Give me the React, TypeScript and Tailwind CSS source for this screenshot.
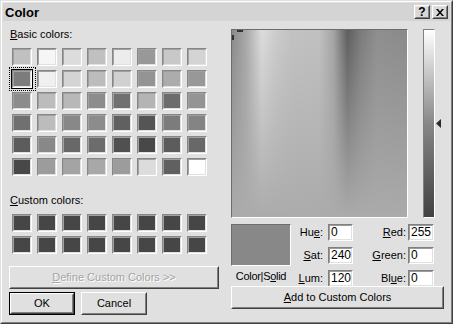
import React from "react";

const basic: string[][] = [
  ["bg-[#c0c0c0]", "bg-[#f6f6f6]", "bg-[#dcdcdc]", "bg-[#c0c0c0]", "bg-[#ececec]", "bg-[#989898]", "bg-[#c8c8c8]", "bg-[#d4d4d4]"],
  ["bg-[#7c7c7c]", "bg-[#f0f0f0]", "bg-[#d4d4d4]", "bg-[#bcbcbc]", "bg-[#d0d0d0]", "bg-[#949494]", "bg-[#acacac]", "bg-[#989898]"],
  ["bg-[#8c8c8c]", "bg-[#bcbcbc]", "bg-[#b8b8b8]", "bg-[#8c8c8c]", "bg-[#707070]", "bg-[#b4b4b4]", "bg-[#6c6c6c]", "bg-[#949494]"],
  ["bg-[#707070]", "bg-[#bcbcbc]", "bg-[#888888]", "bg-[#8c8c8c]", "bg-[#606060]", "bg-[#555555]", "bg-[#7c7c7c]", "bg-[#848484]"],
  ["bg-[#5c5c5c]", "bg-[#888888]", "bg-[#686868]", "bg-[#6c6c6c]", "bg-[#505050]", "bg-[#484848]", "bg-[#5c5c5c]", "bg-[#686868]"],
  ["bg-[#484848]", "bg-[#9c9c9c]", "bg-[#a4a4a4]", "bg-[#a8a8a8]", "bg-[#9c9c9c]", "bg-[#dcdcdc]", "bg-[#606060]", "bg-[#ffffff]"],
];

function Swatch({ color, selected }: { color: string; selected?: boolean }) {
  return (
    <div className="relative w-[20px] h-[18px]">
      <div className="w-full h-full border border-t-[#868686] border-l-[#868686] border-r-white border-b-white">
        <div className={`w-full h-full border border-t-[#a0a0a0] border-l-[#a0a0a0] border-r-[#e0e0e0] border-b-[#e0e0e0] ${color}`} />
      </div>
      {selected && (
        <>
          <div className="absolute -inset-[1px] border border-black" />
          <div className="absolute -top-[3px] -left-[3px] -right-[4px] -bottom-[3px] border border-dotted border-black" />
        </>
      )}
    </div>
  );
}

function Raised({
  children,
  className,
  def,
  disabled,
}: {
  children: React.ReactNode;
  className: string;
  def?: boolean;
  disabled?: boolean;
}) {
  const body = (
    <div className="w-full h-full border border-t-white border-l-white border-r-[#404040] border-b-[#404040]">
      <div
        className={`w-full h-full border border-t-[#e0e0e0] border-l-[#e0e0e0] border-r-[#808080] border-b-[#808080] flex items-center justify-center ${
          disabled ? "text-[#a4a4a4] [text-shadow:1px_1px_0_#ffffff]" : "text-black"
        }`}
      >
        {children}
      </div>
    </div>
  );
  if (def) {
    return <div className={`border border-black ${className}`}>{body}</div>;
  }
  return <div className={className}>{body}</div>;
}

function Field({ value, className }: { value: string; className: string }) {
  return (
    <div className={`h-[17px] border border-t-[#808080] border-l-[#808080] border-r-white border-b-white ${className}`}>
      <div className="w-full h-full border border-t-[#9a9a9a] border-l-[#9a9a9a] border-r-[#e0e0e0] border-b-[#e0e0e0] bg-white pl-[1px] leading-[13px] text-[12px]">
        {value}
      </div>
    </div>
  );
}

function Spectrum() {
  return (
    <div className="w-[177px] h-[189px] border border-t-[#6c6c6c] border-l-[#6c6c6c] border-r-white border-b-white">
      <svg width="175" height="187" className="block">
        <defs>
          <linearGradient id="hue" x1="0" x2="1" y1="0" y2="0">
            <stop offset="0" stopColor="#8a8a8a" />
            <stop offset="0.08" stopColor="#a8a8a8" />
            <stop offset="0.17" stopColor="#dcdcdc" />
            <stop offset="0.25" stopColor="#cccccc" />
            <stop offset="0.34" stopColor="#c2c2c2" />
            <stop offset="0.5" stopColor="#c0c0c0" />
            <stop offset="0.58" stopColor="#a4a4a4" />
            <stop offset="0.66" stopColor="#5e5e5e" />
            <stop offset="0.74" stopColor="#7c7c7c" />
            <stop offset="0.83" stopColor="#8e8e8e" />
            <stop offset="1" stopColor="#8a8a8a" />
          </linearGradient>
          <linearGradient id="sat" x1="0" x2="0" y1="0" y2="1">
            <stop offset="0" stopColor="#ababab" stopOpacity="0" />
            <stop offset="1" stopColor="#ababab" stopOpacity="1" />
          </linearGradient>
        </defs>
        <rect width="175" height="187" fill="url(#hue)" />
        <rect width="175" height="187" fill="url(#sat)" />
        <rect x="5" y="0" width="6" height="2" fill="#333333" />
        <rect x="0" y="5" width="2" height="5" fill="#333333" />
      </svg>
    </div>
  );
}

function LumBar() {
  return (
    <div className="w-[12px] h-[189px] border border-t-[#808080] border-l-[#808080] border-r-white border-b-white">
      <svg width="10" height="187" className="block">
        <defs>
          <linearGradient id="lum" x1="0" x2="0" y1="0" y2="1">
            <stop offset="0" stopColor="#ffffff" />
            <stop offset="0.5" stopColor="#878787" />
            <stop offset="1" stopColor="#404040" />
          </linearGradient>
        </defs>
        <rect width="10" height="187" fill="url(#lum)" />
      </svg>
    </div>
  );
}

export default function App() {
  return (
    <div className="w-[453px] h-[324px] font-['Liberation_Sans',Arial,sans-serif] text-[11px] leading-[13px] text-black border border-t-[#e0e0e0] border-l-[#e0e0e0] border-r-[#404040] border-b-[#404040]">
      <div className="w-full h-full border border-t-white border-l-white border-r-[#808080] border-b-[#808080] bg-[#e0e0e0] p-[1px] flex flex-col">
        {/* Title bar */}
        <div className="h-[18px] bg-[#d4d4d4] flex items-start">
          <div className="pl-[2px] pt-[2px] font-bold text-[13px] leading-[15px]">Color</div>
          <div className="ml-auto mt-[2px] mr-[2px] flex gap-[2px]">
            <div className="w-[16px] h-[14px] border border-t-white border-l-white border-r-[#404040] border-b-[#404040]">
              <div className="w-full h-full border border-t-[#e0e0e0] border-l-[#e0e0e0] border-r-[#808080] border-b-[#808080] bg-[#d8d8d8] flex items-center justify-center font-bold text-[12px] leading-[10px]">
                ?
              </div>
            </div>
            <div className="w-[16px] h-[14px] border border-t-white border-l-white border-r-[#404040] border-b-[#404040]">
              <div className="w-full h-full border border-t-[#e0e0e0] border-l-[#e0e0e0] border-r-[#808080] border-b-[#808080] bg-[#d8d8d8] flex items-center justify-center">
                <svg width="8" height="7" viewBox="0 0 8 7">
                  <path d="M0 0h2l2 2.5 2-2.5h2l-3 3.5 3 3.5h-2l-2-2.5-2 2.5h-2l3-3.5z" fill="#000" />
                </svg>
              </div>
            </div>
          </div>
        </div>

        {/* Body */}
        <div className="flex flex-1">
          {/* Left column */}
          <div className="ml-[6px] w-[210px] flex flex-col">
            <div className="mt-[7px] pl-[1px]">
              <u>B</u>asic colors:
            </div>
            <div className="mt-[7px] ml-[3px] grid grid-cols-[repeat(8,20px)] gap-x-[5px] gap-y-[4px]">
              {basic.map((row, r) =>
                row.map((c, i) => <Swatch key={`${r}-${i}`} color={c} selected={r === 1 && i === 0} />)
              )}
            </div>
            <div className="mt-[18px] pl-[1px]">
              <u>C</u>ustom colors:
            </div>
            <div className="mt-[7px] ml-[3px] grid grid-cols-[repeat(8,20px)] gap-x-[5px] gap-y-[4px]">
              {Array.from({ length: 16 }).map((_, i) => (
                <Swatch key={i} color="bg-[#464646]" />
              ))}
            </div>
            <Raised className="mt-[12px] w-[210px] h-[23px]" disabled>
              <span>
                <u>D</u>efine Custom Colors &gt;&gt;
              </span>
            </Raised>
            <div className="mt-[3px] flex gap-[6px]">
              <Raised className="w-[66px] h-[23px]" def>
                <span>OK</span>
              </Raised>
              <Raised className="w-[66px] h-[23px]">
                <span>Cancel</span>
              </Raised>
            </div>
          </div>

          {/* Right column */}
          <div className="ml-[12px] w-[213px] flex flex-col">
            <div className="mt-[8px] flex items-start">
              <Spectrum />
              <div className="ml-[15px]">
                <LumBar />
              </div>
              <div className="ml-[1px] mt-[90px]">
                <svg width="6" height="9" viewBox="0 0 6 9" className="block">
                  <polygon points="5,0 0,4.5 5,9" fill="#2a2a2a" />
                </svg>
              </div>
            </div>
            <div className="mt-[6px] flex items-start h-[62px]">
              <div className="w-[60px] flex flex-col items-center">
                <div className="w-[60px] h-[42px] border border-t-[#6c6c6c] border-l-[#6c6c6c] border-r-white border-b-white bg-[#888888]" />
                <div className="mt-[3px] leading-[14px] whitespace-nowrap tracking-[-0.3px]">
                  Color|S<u>o</u>lid
                </div>
              </div>
              <div className="flex flex-col gap-[6px]">
                <div className="flex items-center">
                  <div className="w-[32px] text-right">
                    Hu<u>e</u>:
                  </div>
                  <Field value="0" className="ml-[5px] w-[25px]" />
                </div>
                <div className="flex items-center">
                  <div className="w-[32px] text-right">
                    <u>S</u>at:
                  </div>
                  <Field value="240" className="ml-[5px] w-[25px]" />
                </div>
                <div className="flex items-center">
                  <div className="w-[32px] text-right">
                    <u>L</u>um:
                  </div>
                  <Field value="120" className="ml-[5px] w-[25px]" />
                </div>
              </div>
              <div className="flex flex-col gap-[6px]">
                <div className="flex items-center">
                  <div className="w-[53px] text-right">
                    <u>R</u>ed:
                  </div>
                  <Field value="255" className="ml-[2px] w-[26px]" />
                </div>
                <div className="flex items-center">
                  <div className="w-[53px] text-right">
                    <u>G</u>reen:
                  </div>
                  <Field value="0" className="ml-[2px] w-[26px]" />
                </div>
                <div className="flex items-center">
                  <div className="w-[53px] text-right">
                    Bl<u>u</u>e:
                  </div>
                  <Field value="0" className="ml-[2px] w-[26px]" />
                </div>
              </div>
            </div>
            <Raised className="w-[213px] h-[23px]">
              <span>
                <u>A</u>dd to Custom Colors
              </span>
            </Raised>
          </div>
        </div>
      </div>
    </div>
  );
}
